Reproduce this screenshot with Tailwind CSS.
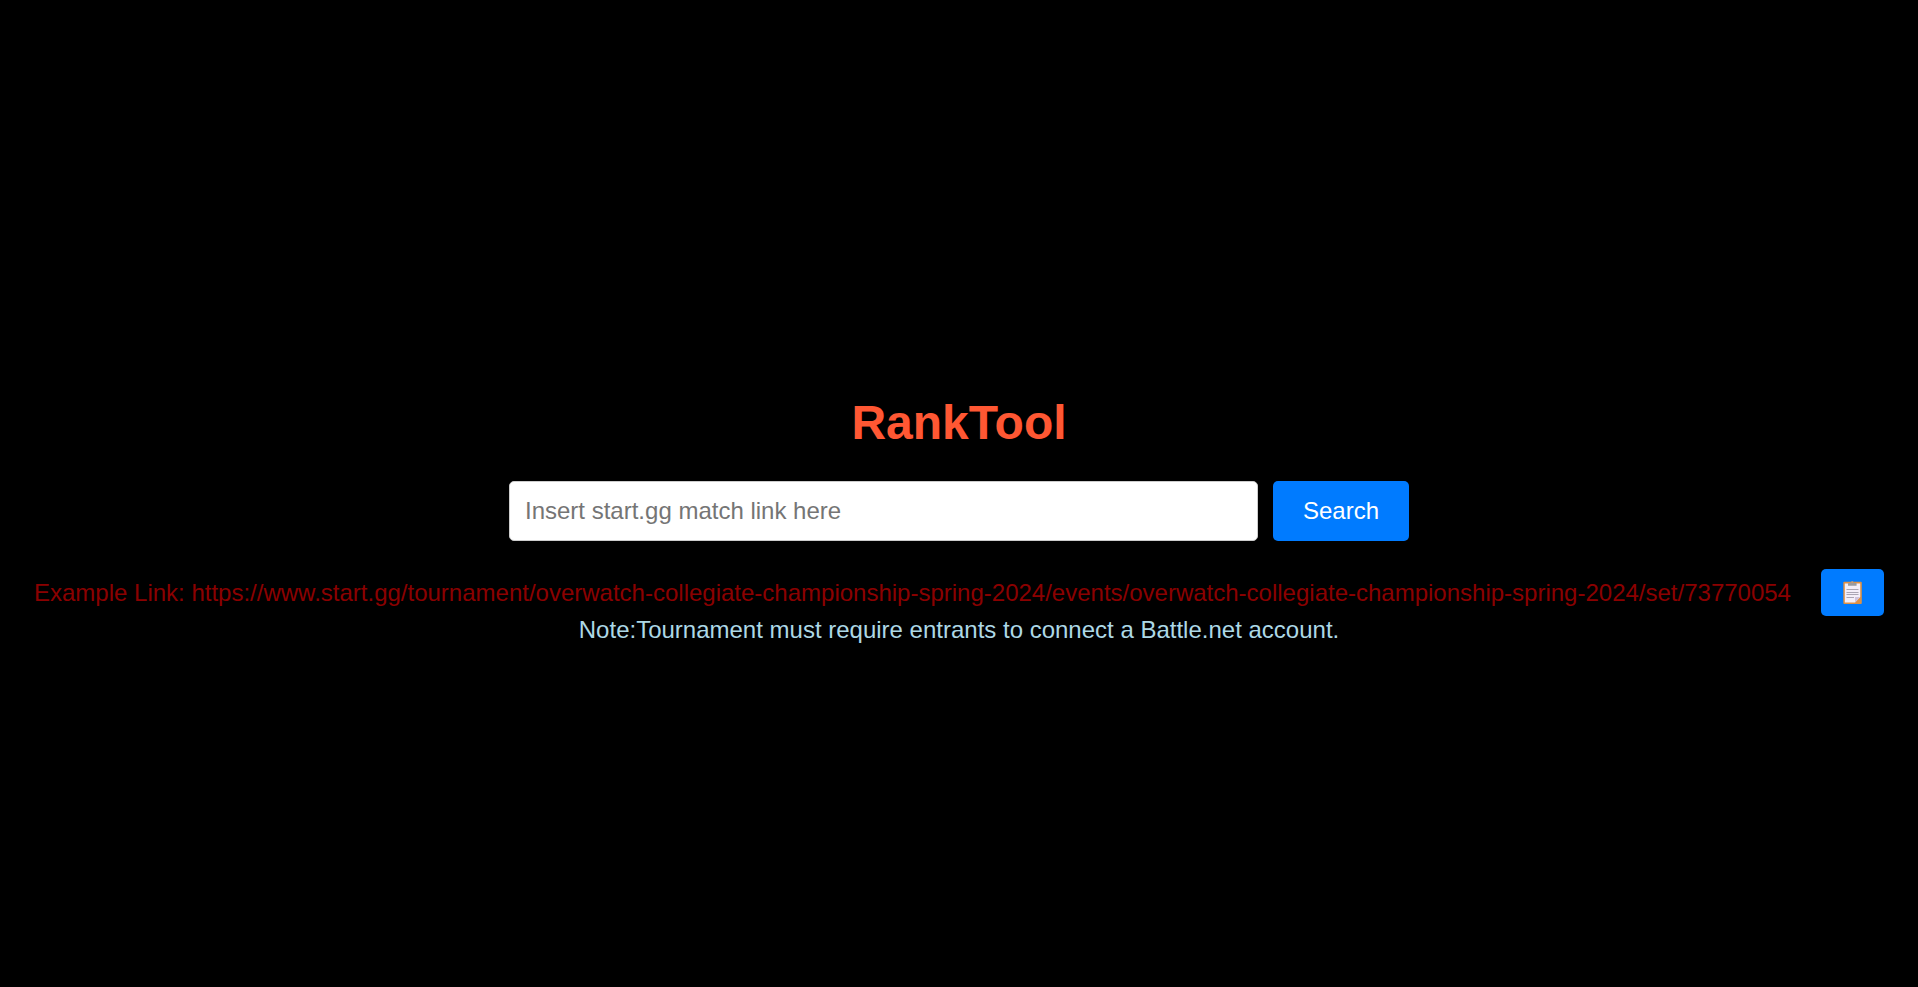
<!DOCTYPE html>
<html lang="en">
<head>
<meta charset="utf-8">
<meta name="viewport" content="width=device-width, initial-scale=1">
<title>RankTool</title>
<script src="https://cdn.jsdelivr.net/npm/@tailwindcss/browser@4"></script>
</head>
<body class="bg-black font-['Liberation_Sans',Arial,sans-serif] text-2xl/7">
<main class="flex min-h-screen flex-col items-center justify-center pt-13">
  <h1 class="mb-[31px] text-5xl/[55px] font-bold text-[#ff5733]">RankTool</h1>
  <form class="mb-7 flex w-full max-w-[900px] gap-[15px]" onsubmit="return false">
    <input type="text" aria-label="Match link" placeholder="Insert start.gg match link here" class="h-15 min-w-0 flex-1 rounded-[5px] border border-[#ccc] bg-white px-[15px] text-black placeholder:text-[#757575]">
    <button type="submit" class="h-15 rounded-[5px] bg-[#007bff] px-[30px] text-white">Search</button>
  </form>
  <div class="flex items-center gap-[30px]">
    <p class="text-[#8b0000]">Example Link: https://www.start.gg/tournament/overwatch-collegiate-championship-spring-2024/events/overwatch-collegiate-championship-spring-2024/set/73770054</p>
    <button type="button" aria-label="Copy example link" class="flex h-[47px] w-[63px] shrink-0 items-center justify-center rounded-[5px] bg-[#007bff]">
      <svg class="h-[23px] w-[19px]" viewBox="0 0 19 23" aria-hidden="true">
        <rect x="0.300" y="0.800" width="18.500" height="22.200" rx="1" fill="#de9145"/>
        <path d="M1.800 2.500H17.200V16L12 21.500H1.800Z" fill="#f3eef8"/>
        <path d="M12 21.500V16H17.200Z" fill="#cfc2dc"/>
        <path d="M5 2H7.500Q8 0 9.300 0Q10.600 0 11.100 2H13.600V4.800H5Z" fill="#989ba0"/>
        <circle cx="9.300" cy="1.400" r="0.900" fill="#d39a68"/>
        <path d="M3.500 8.500H15.500M3.500 11.500H15.500M3.500 13.500H15.500M3.500 16.500H11" stroke="#aaa5b3" stroke-width="1"/>
      </svg>
    </button>
  </div>
  <p class="text-[#add8e6]">Note:Tournament must require entrants to connect a Battle.net account.</p>
</main>
</body>
</html>
